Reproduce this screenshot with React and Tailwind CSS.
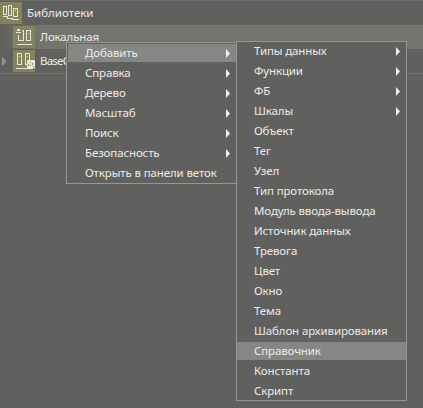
const mainMenu = [
    { label: "Добавить", sub: true, active: true },
    { label: "Справка", sub: true },
    { label: "Дерево", sub: true },
    { label: "Масштаб", sub: true },
    { label: "Поиск", sub: true },
    { label: "Безопасность", sub: true },
    { label: "Открыть в панели веток" },
];

const addMenu = [
    { label: "Типы данных", sub: true },
    { label: "Функции", sub: true },
    { label: "ФБ", sub: true },
    { label: "Шкалы", sub: true },
    { label: "Объект" },
    { label: "Тег" },
    { label: "Узел" },
    { label: "Тип протокола" },
    { label: "Модуль ввода-вывода" },
    { label: "Источник данных" },
    { label: "Тревога" },
    { label: "Цвет" },
    { label: "Окно" },
    { label: "Тема" },
    { label: "Шаблон архивирования" },
    { label: "Справочник", active: true },
    { label: "Константа" },
    { label: "Скрипт" },
];

function IconTile({ children }) {
    return (
        <svg
            className="h-[22px] w-[22px] shrink-0 bg-[#85835c]"
            viewBox="0 0 22 22"
            fill="none"
            stroke="#e6e6dc"
            shapeRendering="crispEdges"
        >
            {children}
        </svg>
    );
}

function LibrariesIcon() {
    return (
        <IconTile>
            <path d="M3.5 4.5h3v8h-3zM8.5 3.5h3v10h-3zM13.5 6.5h4v8h-4z" />
            <path d="M3 14.5h4M7.5 14v2.5M7 16.5h5M12.5 16v2M12 17.5h7" />
            <path d="M15 8.5h1" />
        </IconTile>
    );
}

function LocalIcon() {
    return (
        <IconTile>
            <path d="M4 3h3v2H4zM3 6h5v1H3z" fill="#e6e6dc" stroke="none" />
            <path d="M5.5 9v5.5h5v-10H9M13.5 4.5h4v10h-4zM4 18.5h15" />
            <path d="M15 7.5h1" />
        </IconTile>
    );
}

function BaseIcon() {
    return (
        <IconTile>
            <path d="M4.5 3.5h4v11h-4zM12.5 3.5h4v11h-4zM3 18.5h17M6 6.5h1M14 6.5h1" />
            <path d="M14 10h8v8h-8z" fill="#e6e6dc" stroke="none" />
            <path d="M15 14h1v2h-1zM17 12h1v1h-1zM17 15h1v1h-1zM19 13h1v2h-1zM20 16h1v1h-1z" fill="#85835c" stroke="none" />
        </IconTile>
    );
}

function Menu({ items, className }) {
    return (
        <ul
            className={`absolute flex w-[171px] flex-col gap-[2px] border border-[#969694] bg-[#60605e] ${className}`}
        >
            {items.map((item) => (
                <li
                    key={item.label}
                    className={`flex h-[18px] items-center justify-between pr-[6px] pl-[17px] ${
                        item.active ? "bg-[#868684]" : ""
                    }`}
                >
                    <span>{item.label}</span>
                    {item.sub && (
                        <svg className="h-[9px] w-1" viewBox="0 0 4 9" fill="#f0f0f0">
                            <path d="M0 0l4 4.5L0 9z" />
                        </svg>
                    )}
                </li>
            ))}
        </ul>
    );
}

function TreeLabel({ icon, label, className = "" }) {
    return (
        <div className="flex items-center gap-[5px]">
            {icon}
            <span className={className}>{label}</span>
        </div>
    );
}

export default function App() {
    return (
        <div className="relative h-[408px] w-[423px] overflow-hidden bg-[#60605e] font-['Noto_Sans','Open_Sans',sans-serif] text-[11.5px] leading-[18px] tracking-[-0.13px] whitespace-nowrap text-[#ececea]">
            <div className="flex h-[25px] items-center border-t border-[#6b6b69]">
                <TreeLabel icon={<LibrariesIcon />} label="Библиотеки" className="tracking-normal" />
            </div>
            <div className="flex h-6 items-center bg-linear-to-r from-[#60605e] to-[#74746e] to-[40px] pl-[13px]">
                <TreeLabel icon={<LocalIcon />} label="Локальная" />
            </div>
            <div className="flex h-[25px] items-center border-b border-[#737371] pl-[2px]">
                <svg className="mr-[6px] h-[9px] w-[5px]" viewBox="0 0 5 9" fill="#858583" stroke="#a0a09e">
                    <path d="M.5 1v7l3.5-3.5z" />
                </svg>
                <div className="w-[53px] overflow-hidden">
                    <TreeLabel icon={<BaseIcon />} label="BaseO" className="tracking-[-0.8px]" />
                </div>
            </div>

            <Menu items={mainMenu} className="top-[42px] left-[66px] py-px pl-px" />
            <Menu items={addMenu} className="top-[41px] left-[236px]" />
        </div>
    );
}
